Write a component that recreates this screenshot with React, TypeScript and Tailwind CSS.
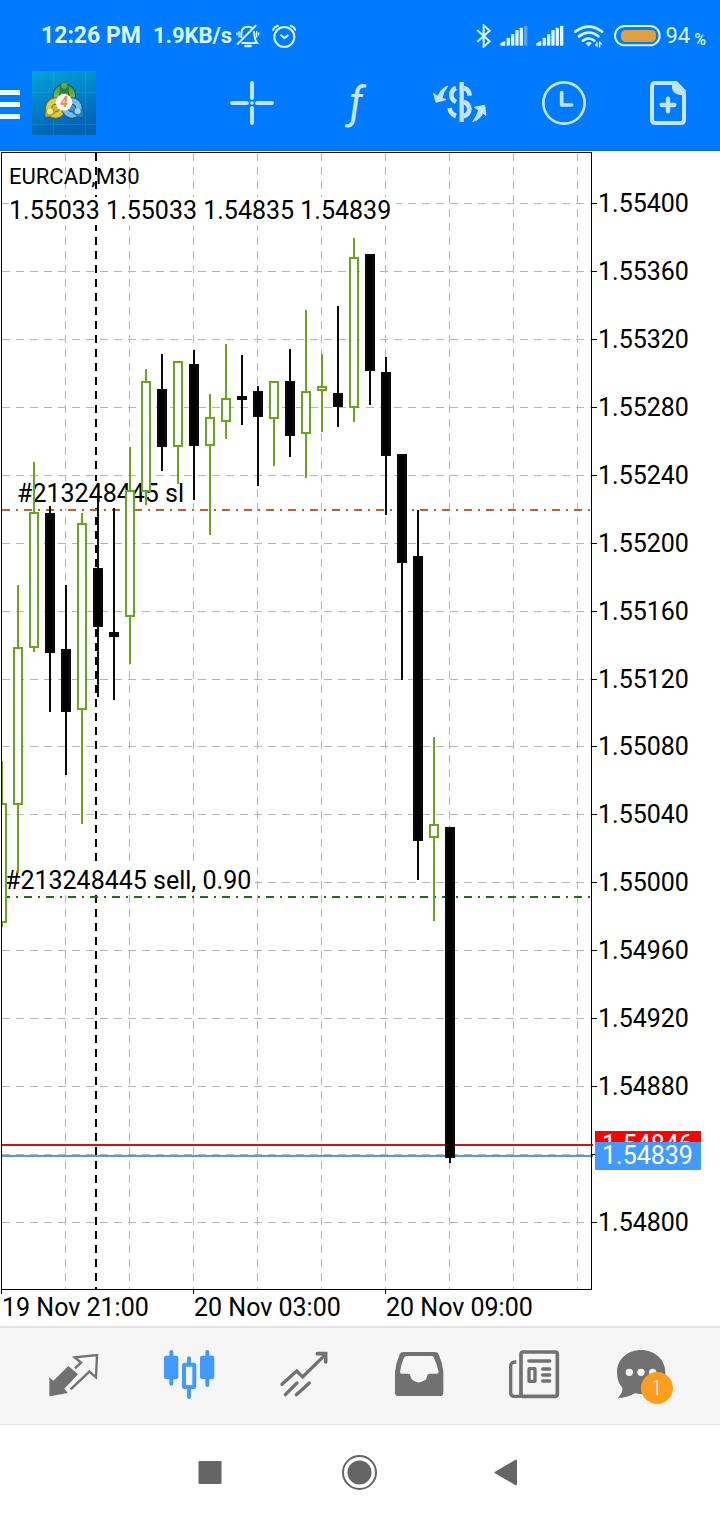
import type { ReactNode } from "react";

type Candle = {
  high: number;
  top: number;
  bottom: number;
  low: number;
  up?: boolean;
};

// One entry per 30 minute bar, in chart units, left to right.
const CANDLES: Candle[] = [
  { high: 761, top: 803, bottom: 923, low: 927, up: true },
  { high: 585, top: 647, bottom: 805, low: 873, up: true },
  { high: 462, top: 512, bottom: 648, low: 652, up: true },
  { high: 506, top: 513, bottom: 653, low: 712 },
  { high: 585, top: 649, bottom: 712, low: 775 },
  { high: 513, top: 523, bottom: 710, low: 824, up: true },
  { high: 493, top: 568, bottom: 627, low: 697 },
  { high: 508, top: 632, bottom: 637, low: 700 },
  { high: 447, top: 490, bottom: 617, low: 664, up: true },
  { high: 369, top: 381, bottom: 492, low: 505, up: true },
  { high: 354, top: 389, bottom: 447, low: 471 },
  { high: 361, top: 361, bottom: 447, low: 484, up: true },
  { high: 350, top: 364, bottom: 446, low: 500 },
  { high: 394, top: 417, bottom: 446, low: 535, up: true },
  { high: 344, top: 398, bottom: 422, low: 439, up: true },
  { high: 355, top: 396, bottom: 400, low: 425 },
  { high: 386, top: 391, bottom: 417, low: 486 },
  { high: 381, top: 381, bottom: 419, low: 466, up: true },
  { high: 349, top: 381, bottom: 436, low: 457 },
  { high: 310, top: 391, bottom: 434, low: 478, up: true },
  { high: 354, top: 386, bottom: 391, low: 432, up: true },
  { high: 306, top: 393, bottom: 407, low: 427 },
  { high: 238, top: 257, bottom: 408, low: 422, up: true },
  { high: 254, top: 254, bottom: 371, low: 405 },
  { high: 357, top: 372, bottom: 456, low: 515 },
  { high: 454, top: 454, bottom: 563, low: 680 },
  { high: 510, top: 556, bottom: 841, low: 880 },
  { high: 737, top: 824, bottom: 838, low: 921, up: true },
  { high: 827, top: 827, bottom: 1158, low: 1163 },
];

const PRICES = Array.from({ length: 16 }, (_, i) => ({
  label: (1.554 - i * 0.0004).toFixed(5),
  y: Math.floor(203.9 + i * 67.88),
}));

const TIMES = [
  { label: "19 Nov 21:00", x: 1 },
  { label: "20 Nov 03:00", x: 193 },
  { label: "20 Nov 09:00", x: 385 },
];

const GRID_X = [65, 129, 193, 257, 321, 385, 449, 513, 577];

function CandleShape({ candle, x }: { candle: Candle; x: number }) {
  const { high, top, bottom, low, up } = candle;
  const color = up ? "#66a81c" : "#0a0a0a";
  return (
    <g fill={color}>
      <rect x={x - 1} y={high} width={2} height={top - high} />
      <rect x={x - 1} y={bottom} width={2} height={low - bottom} />
      <rect
        x={x - 4}
        y={top + 1}
        width={8}
        height={bottom - top - 2}
        fill={up ? "#fff" : "#000"}
        stroke={color}
        strokeWidth={2}
      />
    </g>
  );
}

function Chart() {
  return (
    <svg
      viewBox="0 151 720 1175"
      className="block w-full h-auto bg-white font-['Roboto',sans-serif]"
      role="img"
      aria-label="EURCAD M30 chart"
    >
      <defs>
        <clipPath id="plot">
          <rect x={2} y={153} width={589} height={1136} />
        </clipPath>
      </defs>

      <g stroke="#b5b5b5" strokeWidth={1} strokeDasharray="8 6">
        {GRID_X.map((x) => (
          <line key={x} x1={x + 0.5} y1={153} x2={x + 0.5} y2={1289} />
        ))}
        {PRICES.map(({ y }) => (
          <line key={y} x1={2} y1={y + 0.5} x2={591} y2={y + 0.5} />
        ))}
      </g>
      <line x1={96} y1={153} x2={96} y2={1289} stroke="#000" strokeWidth={2} strokeDasharray="8 6" />

      <g fill="#fff">
        <rect x={9} y={197} width={387} height={28} />
        <rect x={16} y={481} width={170} height={27} />
        <rect x={4} y={863} width={251} height={29} />
      </g>
      <g fill="#000">
        <text x={9} y={184} fontSize={22}>
          EURCAD,M30
        </text>
        <g fontSize={25}>
          <text x={9} y={219}>
            1.55033 1.55033 1.54835 1.54839
          </text>
          <text x={17} y={502}>
            #213248445 sl
          </text>
          <text x={5} y={889}>
            #213248445 sell, 0.90
          </text>
        </g>
      </g>

      <g strokeWidth={2}>
        <g strokeDasharray="8 6 2 6">
          <line x1={2} y1={510} x2={591} y2={510} stroke="#bb6132" />
          <line x1={2} y1={897} x2={591} y2={897} stroke="#1b7014" />
        </g>
        <line x1={2} y1={1145} x2={593} y2={1145} stroke="#c8151b" />
        <line x1={2} y1={1156} x2={593} y2={1156} stroke="#5499d9" />
      </g>

      <g clipPath="url(#plot)">
        {CANDLES.map((candle, i) => (
          <CandleShape key={i} candle={candle} x={2 + i * 16} />
        ))}
      </g>

      <g stroke="#000" strokeWidth={1} fill="none">
        <rect x={1.5} y={152.5} width={590} height={1137} />
        {PRICES.map(({ y }) => (
          <line key={y} x1={591} y1={y + 0.5} x2={597} y2={y + 0.5} />
        ))}
        {TIMES.map(({ x }) => (
          <line key={x} x1={x + 0.5} y1={1289} x2={x + 0.5} y2={1294} />
        ))}
      </g>

      <g fill="#000" fontSize={25}>
        {PRICES.filter(({ label }) => label !== "1.54840").map(({ label, y }) => (
          <text key={label} x={598} y={y + 9}>
            {label}
          </text>
        ))}
        {TIMES.map(({ label, x }) => (
          <text key={label} x={x + 1} y={1316}>
            {label}
          </text>
        ))}
      </g>

      <g fontSize={25}>
        <rect x={595} y={1131} width={106} height={28} fill="#fe0000" />
        <text x={602} y={1153} fill="#fff">
          1.54846
        </text>
        <rect x={595} y={1142} width={106} height={28} fill="#4299ff" />
        <text x={602} y={1164} fill="#fff">
          1.54839
        </text>
      </g>
    </svg>
  );
}

function SignalIcon({ weak }: { weak?: boolean }) {
  return (
    <svg viewBox="413 72 84 66" className="w-7 h-[22px]" fill="currentColor">
      <path d="M414 134v-7q8-6 15-7v14z" />
      <rect x="433" y="110" width="10" height="24" rx="2" />
      <rect x="446" y="99" width="10" height="35" rx="2" />
      <rect x="459" y="87" width="10" height="47" rx="2" />
      <rect x="472" y="80" width="10" height="54" rx="2" />
      <rect x="485" y="74" width="10" height="60" rx="2" opacity={weak ? 0.35 : 1} />
    </svg>
  );
}

function StatusBar() {
  return (
    <div className="flex items-center justify-between h-[55px] pt-4 pl-[41px] pr-[14px] text-[#dcf6ff]">
      <div className="flex items-center font-bold text-[23px] leading-6">
        <span>12:26 PM</span>
        <span className="ml-3 text-[22px]">1.9KB/s</span>
        <svg viewBox="711 69 72 72" className="w-6 h-6 ml-1" fill="none" stroke="currentColor" strokeWidth="6" strokeLinecap="round">
          <path d="M716 129l54-55M727 108V98c0-14 8-21 20-21 5 0 8 1 11 3M765 93c3 12 0 22 9 33h-44" />
          <path d="M739 135h16" strokeWidth="7" />
          <path d="M714 96v6M720 91v17M773 91v17M779 96v6" strokeWidth="4" />
        </svg>
        <svg viewBox="814 69 72 72" className="w-6 h-6 ml-3" fill="none" stroke="currentColor" strokeWidth="6" strokeLinecap="round">
          <circle cx="851" cy="108" r="30" />
          <path d="M841 103l10 8 10-7M817 87q4-10 15-13M870 74q11 3 14 13" />
        </svg>
      </div>
      <div className="flex items-center">
        <svg viewBox="342 69 48 72" className="w-4 h-6" fill="none" stroke="currentColor" strokeWidth="6">
          <path d="M346 88l37 33-18 16V73l18 16-37 33" />
        </svg>
        <div className="flex items-center gap-2 ml-2">
          <SignalIcon weak />
          <SignalIcon />
        </div>
        <svg viewBox="639 69 90 72" className="w-[30px] h-6 ml-[10px]" fill="none" stroke="currentColor" strokeWidth="8" strokeLinecap="round">
          <path d="M643 92q41-30 80 0M654 106q30-23 58 0M666 119q18-13 34 0" />
          <path d="M676 126q7-5 15 0l-8 9z" fill="currentColor" strokeWidth="2" />
          <path d="M708 125v10l-4-4M716 138v-14l5 5" strokeWidth="4" />
        </svg>
        <svg viewBox="756 72 141 66" className="w-[47px] h-[22px] ml-[10px]">
          <rect x="759" y="75" width="134" height="58" rx="29" fill="none" stroke="currentColor" strokeWidth="6" />
          <rect x="777" y="87" width="105" height="36" rx="14" fill="#dfa13c" />
        </svg>
        <span className="flex items-end ml-1 gap-1 text-[22px] leading-6">
          94 <span className="text-base leading-4 font-medium">%</span>
        </span>
      </div>
    </div>
  );
}

function Logo() {
  return (
    <svg viewBox="96 213 192 192" className="size-16">
      <defs>
        <linearGradient id="logo-bg" x1="0" y1="0" x2="0.3" y2="1">
          <stop offset="0" stopColor="#04a4dc" />
          <stop offset="1" stopColor="#0062b4" />
        </linearGradient>
        <linearGradient id="logo-green" x1="0" y1="0" x2="0" y2="1">
          <stop offset="0" stopColor="#4aa04a" />
          <stop offset="1" stopColor="#8dcc66" />
        </linearGradient>
      </defs>
      <rect x="96" y="213" width="192" height="192" fill="url(#logo-bg)" />
      <path d="M160 213v192M256 213v192M96 277h192M96 373h192" stroke="#4fc0ee" strokeWidth="2" opacity="0.35" />
      <circle cx="193" cy="286" r="24" fill="#4aa04a" stroke="#1d5a3a" strokeWidth="22" />
      <circle cx="193" cy="286" r="24" fill="none" stroke="url(#logo-green)" strokeWidth="16" />
      <circle cx="167" cy="324" r="21" fill="#c9b93a" stroke="#6b7420" strokeWidth="22" />
      <circle cx="167" cy="324" r="21" fill="none" stroke="#dccb48" strokeWidth="16" />
      <circle cx="216" cy="324" r="21" fill="#3f93cc" stroke="#165b94" strokeWidth="22" />
      <circle cx="216" cy="324" r="21" fill="none" stroke="#76bce6" strokeWidth="16" />
      <path d="M180 276q-4-29 13-30 17 1 13 30-13 6-26 0z" fill="#2f7d3f" />
      <circle cx="193" cy="257" r="9" fill="#58ab58" />
      <path d="M136 350q-3-24 14-26 15-1 18 14-12 14-32 12z" fill="#b6a62b" />
      <circle cx="150" cy="334" r="9" fill="#f5ea7c" />
      <path d="M248 350q5-20-11-26-15-2-22 12 11 17 33 14z" fill="#2a7fc0" />
      <circle cx="233" cy="333" r="9" fill="#9dd5f2" />
      <circle cx="192" cy="307" r="25" fill="#fffaf2" />
      <text x="192" y="322" textAnchor="middle" fontSize="41" fontWeight="700" fontStyle="italic" fill="#f08a4c">
        4
      </text>
    </svg>
  );
}

function ToolButton({ label, children }: { label: string; children: ReactNode }) {
  return (
    <button aria-label={label} className="flex items-center justify-center w-[104px] h-full">
      {children}
    </button>
  );
}

function Toolbar() {
  return (
    <div className="flex items-center justify-between h-24 border-b border-[#1b63ad] text-[#c4e3ff]">
      <div className="flex items-center gap-3">
        <button aria-label="Menu" className="flex flex-col gap-[7px] pt-1">
          <span className="block w-5 h-[5px] bg-[#e6faff]" />
          <span className="block w-5 h-[5px] bg-[#e6faff]" />
          <span className="block w-5 h-[5px] bg-[#e6faff]" />
        </button>
        <Logo />
      </div>
      <div className="flex items-center h-full">
        <ToolButton label="Crosshair">
          <svg viewBox="690 243 132 132" className="size-11" fill="none" stroke="currentColor" strokeWidth="12" strokeLinecap="round">
            <path d="M696 309h45M771 309h45M756 249v45M756 324v45" />
            <circle cx="756" cy="309" r="5.5" fill="currentColor" stroke="none" />
          </svg>
        </ToolButton>
        <ToolButton label="Indicators">
          <span className="font-['Roboto',sans-serif] italic text-[44px] leading-none">ƒ</span>
        </ToolButton>
        <ToolButton label="One click trading">
          <svg viewBox="219 240 162 138" className="w-[54px] h-[46px]" fill="none" stroke="currentColor" strokeWidth="14">
            <path d="M305 246v120" strokeWidth="13" />
            <path d="M288 264q-14 6-14 21 0 14 14 21M269 324q2 18 19 24M311 264q17 4 18 23M311 306q16 5 17 21 0 16-17 22" />
            <path d="M264 258q-21 6-30 31l-13-8 7 26 30-8-12-5q2-18 18-36zM338 365q22-6 30-26l10 7-4-30-31 6 13 8q-4 18-18 35z" fill="currentColor" stroke="currentColor" strokeWidth="3" />
          </svg>
        </ToolButton>
        <ToolButton label="Timeframe">
          <svg viewBox="546 243 132 132" className="size-11" fill="none" stroke="currentColor">
            <circle cx="612" cy="309" r="62" strokeWidth="8" />
            <path d="M605 278v37h30" strokeWidth="11" strokeLinecap="round" strokeLinejoin="round" />
          </svg>
        </ToolButton>
        <ToolButton label="New order">
          <svg viewBox="858 243 132 132" className="size-11" fill="none" stroke="currentColor" strokeWidth="12">
            <path d="M948 249h-62q-10 0-10 10v100q0 10 10 10h76q10 0 10-10v-85z" strokeLinejoin="round" />
            <path d="M936 246h14l27 27v12h-17q-20-2-24-20z" fill="currentColor" stroke="none" />
            <path d="M924 296v38M905 315h38" strokeWidth="13" strokeLinecap="round" />
          </svg>
        </ToolButton>
      </div>
    </div>
  );
}

function Tab({ label, active, children }: { label: string; active?: boolean; children: ReactNode }) {
  return (
    <button
      aria-label={label}
      className={`flex flex-1 items-center justify-center h-full ${
        active ? "text-[#4299ff]" : "text-[#717171]"
      }`}
    >
      {children}
    </button>
  );
}

function TabBar() {
  return (
    <nav className="flex items-center h-[99px] pl-4 pr-3.5 bg-[#f6f6f6] border-t-2 border-b border-[#e4e4e4]">
      <Tab label="Quotes">
        <svg viewBox="144 90 156 156" className="size-[52px]" fill="none" stroke="currentColor" strokeWidth="7">
          <path d="M148 172l12 10 45-44 29 25-41 43 10 13-53 10q-2 0-2-3z" fill="currentColor" stroke="none" />
          <path d="M225 145l18-17-19-16 67-7-3 67-20-17-56 53" />
        </svg>
      </Tab>
      <Tab label="Chart" active>
        <svg viewBox="487 90 156 156" className="size-[52px]" fill="none" stroke="currentColor" strokeWidth="12" strokeLinecap="round">
          <rect x="490" y="107" width="43" height="70" rx="6" fill="currentColor" stroke="none" />
          <rect x="598" y="107" width="43" height="70" rx="6" fill="currentColor" stroke="none" />
          <path d="M512 96v95M620 96v99M565 115v14M565 207v24" />
          <rect x="550" y="134" width="31" height="67" rx="2" />
        </svg>
      </Tab>
      <Tab label="Trade">
        <svg viewBox="831 90 156 156" className="size-[52px]" fill="none" stroke="currentColor" strokeWidth="10" strokeLinecap="round">
          <path d="M843 193l44-40 18 18 68-67M853 224l35-35M886 224l39-35" />
          <path d="M949 101h25v25" strokeWidth="11" />
        </svg>
      </Tab>
      <Tab label="History">
        <svg viewBox="97 90 156 156" className="size-[52px]" fill="currentColor">
          <path
            fillRule="evenodd"
            d="M128 96h94q9 0 12 7 11 25 14 52v63q0 10-10 10H114q-11 0-11-10v-63q3-27 14-52 3-7 11-7zM138 108q-6 0-8 5-9 19-12 42 0 6 6 6h17q8 0 8 7a26 24 0 0 0 51 0q0-7 8-7h20q6 0 6-6-5-22-15-43-2-4-8-4z"
          />
        </svg>
      </Tab>
      <Tab label="News">
        <svg viewBox="442 90 156 156" className="size-[52px]" fill="none" stroke="currentColor" strokeWidth="10" strokeLinecap="round">
          <rect x="481" y="96" width="109" height="133" rx="6" strokeWidth="11" />
          <path d="M467 126q-17-1-17 12v80q0 11 12 11h20" strokeLinecap="butt" />
          <path d="M505 123h62" strokeWidth="11" />
          <rect x="505" y="146" width="18" height="38" rx="1" />
          <path d="M546 147h21M546 165h21M546 183h21" />
        </svg>
      </Tab>
      <Tab label="Messages">
        <span className="relative block">
          <svg viewBox="765 84 192 168" className="w-16 h-14" fill="currentColor">
            <path d="M837 90c41 0 73 29 73 66s-32 66-73 66q-10 0-18-2-24 14-53 14 17-14 15-31c-11-12-16-27-16-47 0-37 31-66 72-66z" />
            <g fill="#f6f6f6">
              <circle cx="802" cy="157" r="11" />
              <circle cx="837" cy="157" r="11" />
              <circle cx="872" cy="157" r="11" />
            </g>
          </svg>
          <span className="absolute left-6 top-6 flex items-center justify-center size-8 rounded-full bg-[#ff9d1c] text-white text-xl leading-none font-light">
            1
          </span>
        </span>
      </Tab>
    </nav>
  );
}

function SystemNav() {
  return (
    <div className="flex items-center justify-center h-[95px] bg-white text-[#656565]">
      <button aria-label="Recent apps" className="flex items-center justify-center w-[150px] h-full">
        <svg viewBox="0 0 40 40" className="size-10" fill="currentColor">
          <rect x="8.500" y="8" width="23" height="23" rx="1" />
        </svg>
      </button>
      <button aria-label="Home" className="flex items-center justify-center w-[150px] h-full">
        <svg viewBox="0 0 40 40" className="size-10" fill="currentColor">
          <circle cx="19.500" cy="19.500" r="16.500" fill="none" stroke="currentColor" strokeWidth="2" />
          <circle cx="19.500" cy="19.500" r="12" />
        </svg>
      </button>
      <button aria-label="Back" className="flex items-center justify-center w-[150px] h-full">
        <svg viewBox="0 0 40 40" className="size-10" fill="currentColor">
          <path d="M5 18.700L25.500 6.800q1.500-.6 1.500 1v23.400q0 1.600-1.500 1L5 20.300q-1-.8 0-1.600z" />
        </svg>
      </button>
    </div>
  );
}

export default function App() {
  return (
    <div className="min-h-screen bg-white font-['Roboto',sans-serif]">
      <header className="bg-[#007aff]">
        <StatusBar />
        <Toolbar />
      </header>
      <main>
        <Chart />
      </main>
      <TabBar />
      <SystemNav />
    </div>
  );
}
